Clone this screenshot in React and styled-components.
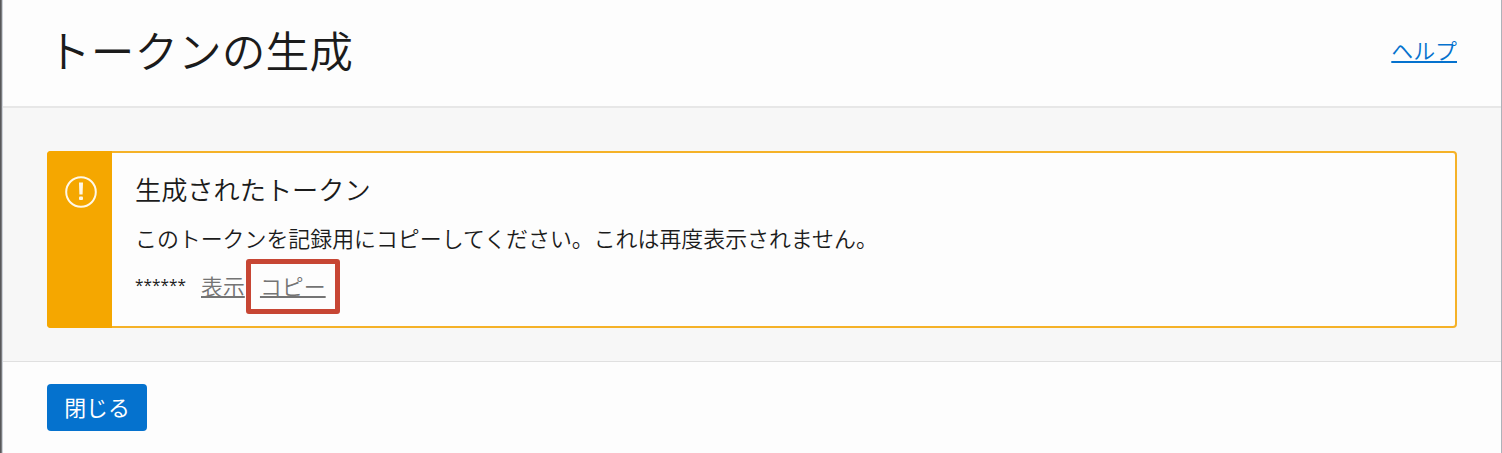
import React from "react";
import styled, { createGlobalStyle } from "styled-components";

const GlobalStyle = createGlobalStyle`
  * { box-sizing: border-box; }
  body {
    margin: 0;
    overflow: hidden;
    color: #1b1b1b;
    font-family: "Noto Sans CJK JP", "Noto Sans", sans-serif;
    font-size: 21.92px;
    font-weight: 350;
  }
`;

const Backdrop = styled.div`
  height: 453px;
  padding: 0 1px 0 2px;
  background: linear-gradient(90deg, #58585a 0 1px, #7c7d80 1px 2px, #aeb2b9 2px);
`;

const Panel = styled.main`
  display: flex;
  flex-direction: column;
  height: 100%;
  border-left: 1px solid #cdd2d9;
  background: #fdfdfd;
`;

const Header = styled.header`
  display: flex;
  align-items: center;
  justify-content: space-between;
  height: 108px;
  padding: 0 44px 6px;
  border-bottom: 2px solid #e7e7e7;
`;

const Title = styled.h1`
  margin: 0;
  padding-bottom: 2px;
  font-size: 43.7px;
  font-weight: 350;
  line-height: 64px;
`;

const Link = styled.a`
  color: ${(p) => (p.$muted ? "#747474" : "#0572ce")};
  line-height: 32px;
  text-decoration: underline;
  text-decoration-thickness: ${(p) => (p.$muted ? "1.5px" : "2px")};
  text-underline-offset: ${(p) => (p.$muted ? "1px" : "2px")};
  text-decoration-skip-ink: none;
`;

const Body = styled.section`
  height: 254px;
  padding: 43px 44px 0;
  border-bottom: 1px solid #e0e0e0;
  background: #f7f7f7;
`;

const Alert = styled.div`
  display: flex;
  height: 177px;
  border: 2px solid #f5b228;
  border-radius: 4px;
  background: #fdfdfd;
`;

const AlertStripe = styled.div`
  display: flex;
  justify-content: center;
  width: 65px;
  margin: -2px 0 -2px -2px;
  padding-top: 25px;
  padding-left: 3px;
  border-radius: 4px 0 0 4px;
  background: #f5a700;
`;

const AlertContent = styled.div`
  padding: 17px 23px;
`;

const AlertTitle = styled.h2`
  margin: 0 0 14px;
  font-size: 26.2px;
  font-weight: 350;
  line-height: 38px;
`;

const Message = styled.p`
  margin: 0 0 16px;
  line-height: 32px;
`;

const TokenRow = styled.div`
  display: flex;
  align-items: center;
  height: 32px;
`;

const Mask = styled.span`
  width: 66px;
  padding-bottom: 2px;
  font-family: "Open Sans", "Noto Sans", sans-serif;
  font-size: 15.4px;
  font-weight: 500;
`;

const Highlight = styled.span`
  display: flex;
  align-items: center;
  justify-content: center;
  flex: none;
  width: 94px;
  height: 55px;
  margin-left: 1px;
  border: 5px solid #c74634;
  border-radius: 3px;
`;

const Footer = styled.footer`
  padding: 22px 44px;
`;

const Button = styled.button`
  display: block;
  width: 100px;
  height: 47px;
  padding: 0 0 2px;
  border: 0;
  border-radius: 4px;
  background: #0572ce;
  color: #fff;
  font: inherit;
  font-weight: 400;
  line-height: 45px;
`;

const WarningIcon = () => (
  <svg width="32" height="32" viewBox="0 0 32 32" fill="none">
    <circle cx="16" cy="16" r="14.8" stroke="#fff8e8" strokeWidth="2" />
    <path d="M14 6.5h4l-.4 12h-3.2z" fill="#fff8e8" />
    <rect x="14" y="20.5" width="4" height="3.5" rx="1" fill="#fff8e8" />
  </svg>
);

export default function App() {
  return (
    <>
      <GlobalStyle />
      <Backdrop>
        <Panel>
          <Header>
            <Title>トークンの生成</Title>
            <Link>ヘルプ</Link>
          </Header>
          <Body>
            <Alert>
              <AlertStripe>
                <WarningIcon />
              </AlertStripe>
              <AlertContent>
                <AlertTitle>生成されたトークン</AlertTitle>
                <Message>このトークンを記録用にコピーしてください。これは再度表示されません。</Message>
                <TokenRow>
                  <Mask>******</Mask>
                  <Link $muted>表示</Link>
                  <Highlight>
                    <Link $muted>コピー</Link>
                  </Highlight>
                </TokenRow>
              </AlertContent>
            </Alert>
          </Body>
          <Footer>
            <Button>閉じる</Button>
          </Footer>
        </Panel>
      </Backdrop>
    </>
  );
}
